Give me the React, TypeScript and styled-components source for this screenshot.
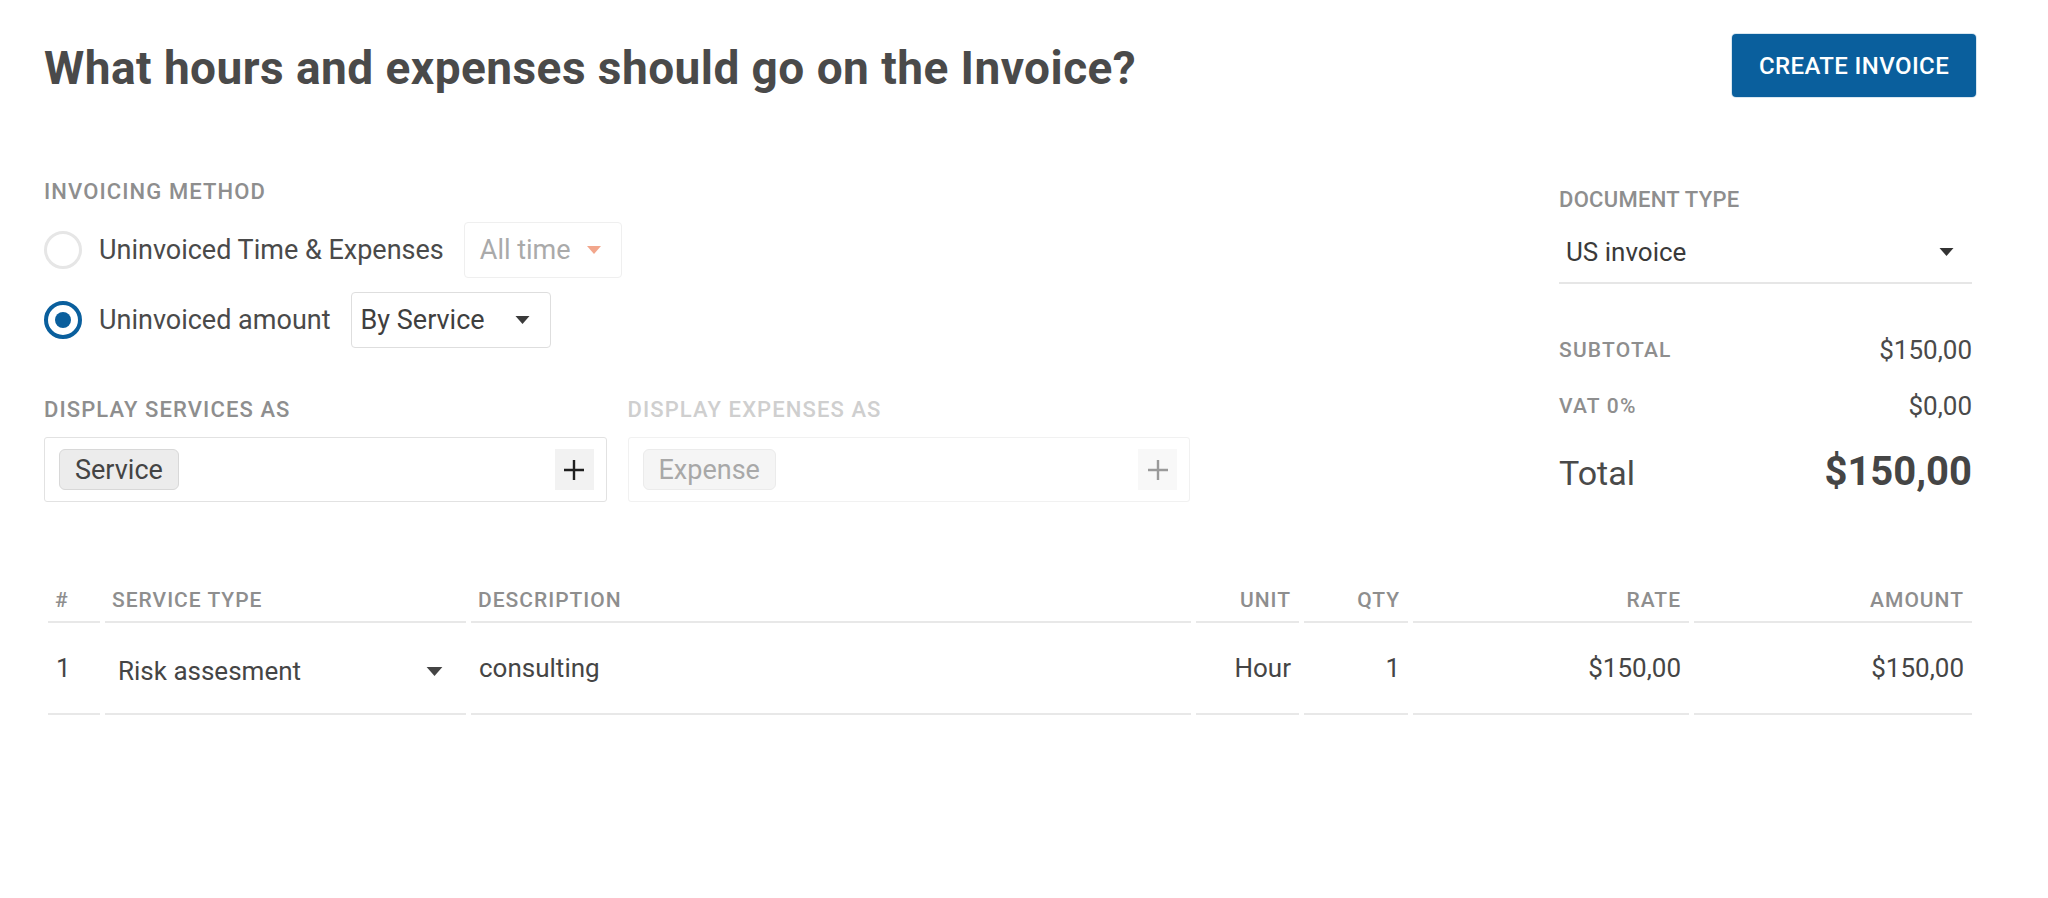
import React from "react";
import styled, { createGlobalStyle } from "styled-components";

const GlobalStyle = createGlobalStyle`
  html, body {
    margin: 0;
    padding: 0;
    background: #fff;
  }
  body {
    font-family: Roboto, "Noto Sans", sans-serif;
    color: #4a4a4a;
  }
  * {
    box-sizing: border-box;
  }
`;

const Page = styled.div`
  width: 2048px;
  height: 898px;
  padding: 34px 76px 0 44px;
  background: #fff;
  overflow: hidden;
`;

const Header = styled.header`
  display: flex;
  align-items: center;
  justify-content: space-between;
  height: 63px;
`;

const Title = styled.h1`
  margin: 5px 0 0;
  font-size: 46px;
  font-weight: 700;
  line-height: 1;
  color: #4a4a4a;
  letter-spacing: 0.45px;
`;

const PrimaryButton = styled.button`
  width: 244px;
  height: 63px;
  margin-right: -4px;
  border: none;
  border-radius: 4px;
  background: #0a5f9d;
  color: #fff;
  font-family: Roboto, sans-serif;
  font-size: 24px;
  font-weight: 500;
  letter-spacing: 0.4px;
  box-shadow: 0 0 0 1px rgba(10, 95, 157, 0.15);
  cursor: pointer;
`;

const Body = styled.div`
  display: flex;
  justify-content: space-between;
`;

const LeftCol = styled.div`
  width: 1146px;
  padding-top: 82px;
`;

const RightCol = styled.div`
  width: 413px;
  padding-top: 90px;
`;

const SectionLabel = styled.div<{ $faded?: boolean; $tight?: boolean }>`
  font-size: 22px;
  font-weight: 500;
  line-height: 26px;
  letter-spacing: ${(p) => (p.$tight ? "0.3px" : "1.1px")};
  text-transform: uppercase;
  color: ${(p) => (p.$faded ? "#cfcfcf" : "#8e8e8e")};
`;

const RadioGroup = styled.div`
  display: flex;
  flex-direction: column;
  gap: 14px;
  margin-top: 17px;
`;

const RadioRow = styled.label`
  display: flex;
  align-items: center;
  height: 56px;
  cursor: pointer;
`;

const RadioCircle = styled.span<{ $checked?: boolean }>`
  display: grid;
  place-items: center;
  width: 38px;
  height: 38px;
  margin-right: 17px;
  border-radius: 50%;
  border: ${(p) => (p.$checked ? "4px solid #0a5f9d" : "3px solid #e6e6e6")};

  &::after {
    content: "";
    display: ${(p) => (p.$checked ? "block" : "none")};
    width: 16px;
    height: 16px;
    border-radius: 50%;
    background: #0a5f9d;
  }
`;

const RadioText = styled.span`
  font-size: 27px;
  color: #4a4a4a;
  margin-right: 20px;
`;

const SelectBox = styled.div<{ $w: number; $pl: number; $disabled?: boolean }>`
  display: flex;
  align-items: center;
  justify-content: space-between;
  width: ${(p) => p.$w}px;
  height: 100%;
  padding: 0 20px 0 ${(p) => p.$pl}px;
  border: 1px solid ${(p) => (p.$disabled ? "#efefef" : "#dedede")};
  border-radius: 4px;
  font-size: 27px;
  color: ${(p) => (p.$disabled ? "#aaaaaa" : "#3f3f3f")};
`;

const Caret = ({ color, w = 14, h = 8 }: { color: string; w?: number; h?: number }) => (
  <svg width={w} height={h} viewBox="0 0 14 8">
    <path d="M0 0h14L7 8z" fill={color} />
  </svg>
);

const Plus = ({ color }: { color: string }) => (
  <svg width="22" height="22" viewBox="0 0 22 22">
    <path d="M11 1v20M1 11h20" stroke={color} strokeWidth="2.4" fill="none" />
  </svg>
);

const DisplayRow = styled.div`
  display: flex;
  gap: 21px;
  margin-top: 49px;
`;

const DisplayField = styled.div`
  flex: 1;
`;

const TagBox = styled.div<{ $faded?: boolean }>`
  display: flex;
  align-items: center;
  justify-content: space-between;
  height: 65px;
  margin-top: 14px;
  padding: 0 12px 0 14px;
  border: 1px solid ${(p) => (p.$faded ? "#f1f1f1" : "#e2e2e2")};
  border-radius: 3px;
`;

const Chip = styled.span<{ $faded?: boolean }>`
  display: inline-flex;
  align-items: center;
  height: 41px;
  padding: 0 15px;
  border-radius: 6px;
  border: 1px solid ${(p) => (p.$faded ? "#ebebeb" : "#d8d8d8")};
  background: ${(p) => (p.$faded ? "#f5f5f5" : "#ececec")};
  font-size: 27px;
  color: ${(p) => (p.$faded ? "#a8a8a8" : "#444")};
`;

const AddButton = styled.span<{ $faded?: boolean }>`
  display: grid;
  place-items: center;
  width: 39px;
  height: 41px;
  background: ${(p) => (p.$faded ? "#f8f8f8" : "#f2f2f2")};
`;

const DocSelect = styled.div`
  display: flex;
  align-items: center;
  justify-content: space-between;
  height: 63px;
  margin-top: 8px;
  padding: 0 18px 0 7px;
  border-bottom: 2px solid #e6e6e6;
  font-size: 26px;
  color: #3a3a3a;
`;

const SummaryRow = styled.div<{ $gap: number }>`
  display: flex;
  align-items: center;
  justify-content: space-between;
  height: 30px;
  margin-top: ${(p) => p.$gap}px;
`;

const SummaryLabel = styled.span`
  font-size: 21px;
  font-weight: 500;
  letter-spacing: 1.2px;
  color: #8e8e8e;
`;

const SummaryValue = styled.span`
  font-size: 26px;
  color: #4a4a4a;
`;

const TotalRow = styled.div`
  display: flex;
  align-items: baseline;
  justify-content: space-between;
  height: 48px;
  margin-top: 27px;
`;

const TotalLabel = styled.span`
  font-size: 34px;
  color: #4a4a4a;
`;

const TotalValue = styled.span`
  font-size: 40px;
  font-weight: 700;
  color: #454545;
`;

const Table = styled.div`
  display: grid;
  grid-template-columns: 52px 361px 1fr 103px 104px 276px 278px;
  column-gap: 5px;
  margin: 58px 0 0 4px;
`;

const HeadCell = styled.div<{ $right?: boolean }>`
  display: flex;
  align-items: flex-end;
  justify-content: ${(p) => (p.$right ? "flex-end" : "flex-start")};
  height: 63px;
  padding: 0 8px 8px 7px;
  border-bottom: 2px solid #e8e8e8;
  font-size: 21px;
  font-weight: 500;
  line-height: 26px;
  letter-spacing: 1px;
  color: #8e8e8e;
`;

const Cell = styled.div<{ $right?: boolean }>`
  display: flex;
  align-items: center;
  justify-content: ${(p) => (p.$right ? "flex-end" : "flex-start")};
  height: 92px;
  padding: 0 8px 0 8px;
  border-bottom: 2px solid #e8e8e8;
  font-size: 26px;
  color: #454545;
`;

const CellSelect = styled.div`
  display: flex;
  align-items: center;
  justify-content: space-between;
  width: 100%;
  padding: 6px 15px 0 5px;
`;

export default function App() {
  return (
    <>
      <GlobalStyle />
      <Page>
        <Header>
          <Title>What hours and expenses should go on the Invoice?</Title>
          <PrimaryButton>CREATE INVOICE</PrimaryButton>
        </Header>

        <Body>
          <LeftCol>
            <SectionLabel>Invoicing method</SectionLabel>
            <RadioGroup>
              <RadioRow>
                <RadioCircle />
                <RadioText>Uninvoiced Time &amp; Expenses</RadioText>
                <SelectBox $w={158} $pl={15} $disabled>
                  <span>All time</span>
                  <Caret color="#f2a68c" />
                </SelectBox>
              </RadioRow>
              <RadioRow>
                <RadioCircle $checked />
                <RadioText>Uninvoiced amount</RadioText>
                <SelectBox $w={200} $pl={9}>
                  <span>By Service</span>
                  <Caret color="#3a3a3a" w={15} />
                </SelectBox>
              </RadioRow>
            </RadioGroup>

            <DisplayRow>
              <DisplayField>
                <SectionLabel>Display services as</SectionLabel>
                <TagBox>
                  <Chip>Service</Chip>
                  <AddButton>
                    <Plus color="#1f1f1f" />
                  </AddButton>
                </TagBox>
              </DisplayField>
              <DisplayField>
                <SectionLabel $faded>Display expenses as</SectionLabel>
                <TagBox $faded>
                  <Chip $faded>Expense</Chip>
                  <AddButton $faded>
                    <Plus color="#9a9a9a" />
                  </AddButton>
                </TagBox>
              </DisplayField>
            </DisplayRow>
          </LeftCol>

          <RightCol>
            <SectionLabel $tight>Document type</SectionLabel>
            <DocSelect>
              <span>US invoice</span>
              <Caret color="#333" w={15} />
            </DocSelect>
            <SummaryRow $gap={51}>
              <SummaryLabel>SUBTOTAL</SummaryLabel>
              <SummaryValue>$150,00</SummaryValue>
            </SummaryRow>
            <SummaryRow $gap={26}>
              <SummaryLabel>VAT 0%</SummaryLabel>
              <SummaryValue>$0,00</SummaryValue>
            </SummaryRow>
            <TotalRow>
              <TotalLabel>Total</TotalLabel>
              <TotalValue>$150,00</TotalValue>
            </TotalRow>
          </RightCol>
        </Body>

        <Table>
          <HeadCell>#</HeadCell>
          <HeadCell>SERVICE TYPE</HeadCell>
          <HeadCell>DESCRIPTION</HeadCell>
          <HeadCell $right>UNIT</HeadCell>
          <HeadCell $right>QTY</HeadCell>
          <HeadCell $right>RATE</HeadCell>
          <HeadCell $right>AMOUNT</HeadCell>

          <Cell>1</Cell>
          <Cell>
            <CellSelect>
              <span>Risk assesment</span>
              <Caret color="#444" w={17} h={9} />
            </CellSelect>
          </Cell>
          <Cell>consulting</Cell>
          <Cell $right>Hour</Cell>
          <Cell $right>1</Cell>
          <Cell $right>$150,00</Cell>
          <Cell $right>$150,00</Cell>
        </Table>
      </Page>
    </>
  );
}
